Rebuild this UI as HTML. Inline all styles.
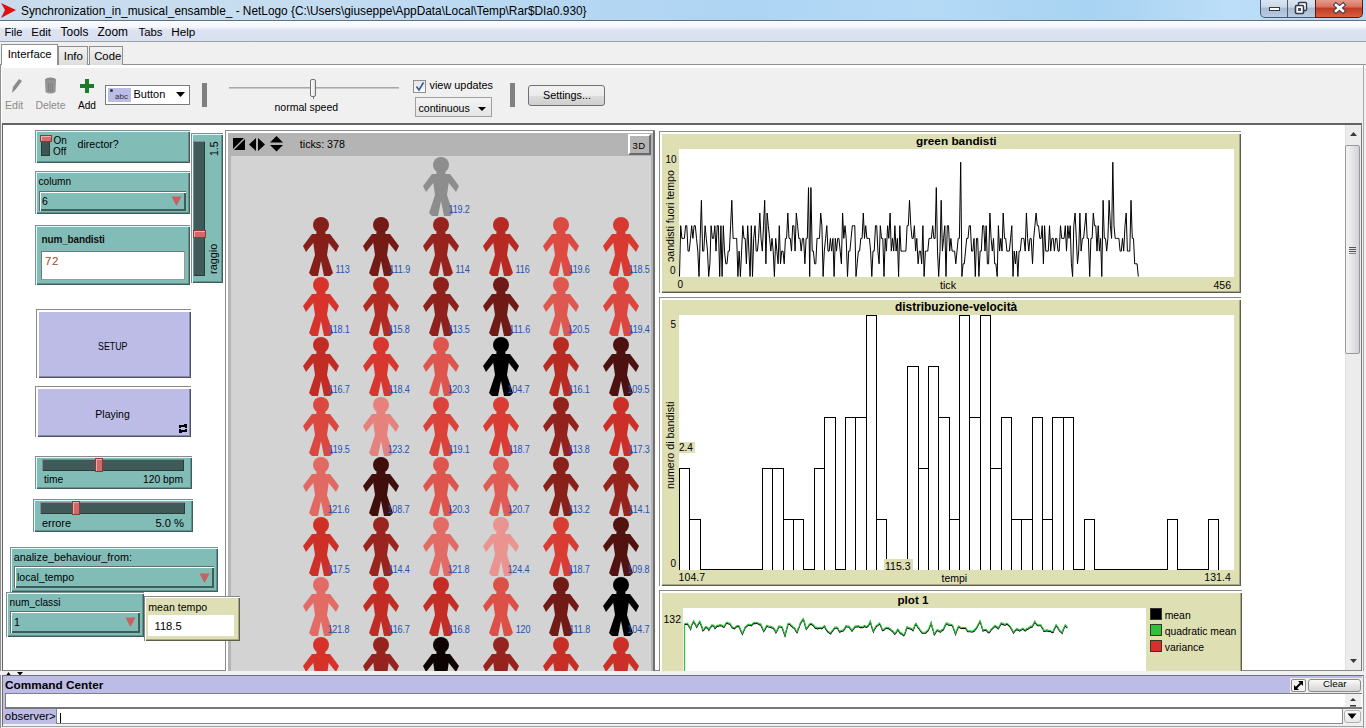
<!DOCTYPE html><html><head><meta charset="utf-8"><style>
*{margin:0;padding:0;box-sizing:border-box}
html,body{width:1366px;height:728px;overflow:hidden;background:#f0f0f0;font-family:"Liberation Sans",sans-serif;font-size:12px;color:#000;position:relative}
.a{position:absolute}
.t{position:absolute;white-space:nowrap;line-height:1}
</style></head><body>

<div class="a" style="left:0;top:0;width:1366px;height:21px;background:linear-gradient(90deg,#c9dcee 0%,#c6ddf0 20%,#b6d7f2 40%,#aed5f4 55%,#b4daf6 68%,#a8d3f2 80%,#bcdef8 90%,#b3d8f4 100%)"></div>
<div class="a" style="left:0;top:20px;width:1366px;height:1px;background:#5f6f80"></div>
<svg class="a" style="left:0;top:2px" width="18" height="17"><polygon points="1,1 16,8 1,16 5,8" fill="#e01010"/></svg>
<div class="t" style="left:21px;top:6px;font-size:11.85px;color:#000">Synchronization_in_musical_ensamble_ - NetLogo {C:\Users\giuseppe\AppData\Local\Temp\Rar$DIa0.930}</div>
<div class="a" style="left:1260px;top:-1px;width:28px;height:19px;border:1px solid #4a5a6c;border-top:none;border-radius:0 0 0 5px;background:linear-gradient(#dbe6f2 0%,#c9d9ea 45%,#a6bbd2 50%,#b8cde2 100%)"></div>
<div class="a" style="left:1269px;top:7px;width:11px;height:4px;background:#fff;border:1px solid #333a44"></div>
<div class="a" style="left:1288px;top:-1px;width:27px;height:19px;border-bottom:1px solid #4a5a6c;background:linear-gradient(#dbe6f2 0%,#c9d9ea 45%,#a6bbd2 50%,#b8cde2 100%)"></div>
<svg class="a" style="left:1294px;top:1px" width="14" height="15"><rect x="4.5" y="1.5" width="8" height="8" rx="1" fill="#fff" stroke="#333a44" stroke-width="1.4"/><rect x="1.5" y="4.5" width="8" height="8" rx="1" fill="#fff" stroke="#333a44" stroke-width="1.6"/><rect x="4" y="7" width="3" height="3" fill="#4a5260"/></svg>
<div class="a" style="left:1315px;top:-1px;width:48px;height:19px;border:1px solid #5a1a10;border-top:none;border-radius:0 0 5px 0;background:linear-gradient(#e8a090 0%,#d87060 45%,#c03a20 50%,#d86040 100%)"></div>
<svg class="a" style="left:1331px;top:1px" width="16" height="14"><path d="M5,4 L12,10 M12,4 L5,10" stroke="#40384a" stroke-width="4.6" stroke-linecap="square"/><path d="M5,4 L12,10 M12,4 L5,10" stroke="#fff" stroke-width="2.6" stroke-linecap="square"/></svg>

<div class="a" style="left:0;top:21px;width:1366px;height:20px;background:linear-gradient(#fbfcfe 0%,#f3f6fb 30%,#dde3f2 45%,#d9e0f1 100%)"></div>
<div class="a" style="left:0;top:41px;width:1366px;height:1px;background:#a0a0a0"></div>
<div class="t" style="left:4.5px;top:26.5px;font-size:11.2px">File</div>
<div class="t" style="left:31.3px;top:26.5px;font-size:11.4px">Edit</div>
<div class="t" style="left:60.6px;top:26.5px;font-size:11.9px">Tools</div>
<div class="t" style="left:97.5px;top:26.5px;font-size:11.9px">Zoom</div>
<div class="t" style="left:138.5px;top:26.5px;font-size:11.4px">Tabs</div>
<div class="t" style="left:171.3px;top:26px;font-size:11.7px">Help</div>
<div class="a" style="left:0;top:64px;width:1366px;height:1px;background:#8e8f8f"></div>
<div class="a" style="left:1px;top:44px;width:57px;height:21px;background:#fff;border:1px solid #8e8f8f;border-bottom:none"></div>
<div class="t" style="left:7.7px;top:49px;font-size:11.3px">Interface</div>
<div class="a" style="left:58px;top:46px;width:30px;height:19px;background:linear-gradient(#f2f2f2,#dddddd);border:1px solid #8e8f8f;border-bottom:none"></div>
<div class="t" style="left:63.7px;top:51px;font-size:11.5px">Info</div>
<div class="a" style="left:89px;top:46px;width:34px;height:19px;background:linear-gradient(#f2f2f2,#dddddd);border:1px solid #8e8f8f;border-bottom:none"></div>
<div class="t" style="left:94.2px;top:51px;font-size:11.3px">Code</div>
<div class="a" style="left:1px;top:65px;width:1365px;height:58px;background:#f0f0f0;border-left:1px solid #fff"></div>
<div class="a" style="left:1px;top:65px;width:1365px;height:3px;background:#fff"></div>
<svg class="a" style="left:10px;top:78px" width="14" height="17"><polygon points="2,15 3,9 9,1 12,3 6,11" fill="#8a8a8a"/></svg>
<svg class="a" style="left:44px;top:77px" width="14" height="18"><ellipse cx="6.5" cy="3" rx="5.5" ry="2.5" fill="#8a8a8a"/><path d="M1,3 L1.5,15 Q6.5,18 11.5,15 L12,3 Z" fill="#949494"/><path d="M4.5,6 V14 M6.5,6 V15 M8.5,6 V14" stroke="#7c7c7c" stroke-width="0.8"/></svg>
<div class="a" style="left:85px;top:79px;width:4px;height:14px;background:#1a7b2a"></div>
<div class="a" style="left:80px;top:84px;width:14px;height:4px;background:#1a7b2a"></div>
<div class="t" style="left:5px;top:100px;font-size:10.6px;color:#8c8c8c">Edit</div>
<div class="t" style="left:35.5px;top:101px;font-size:10.4px;color:#8c8c8c">Delete</div>
<div class="t" style="left:78px;top:101px;font-size:10.1px;color:#000">Add</div>
<div class="a" style="left:105px;top:85px;width:85px;height:20px;border:1px solid #7a7a7a;background:#fff"></div>
<div class="a" style="left:108px;top:88px;width:23px;height:14px;background:#bcbce6"></div>
<div class="t" style="left:115px;top:93px;font-size:8px;color:#333">abc</div>
<div class="a" style="left:110px;top:89px;width:3px;height:3px;background:#333;border-radius:2px"></div>
<div class="t" style="left:133.5px;top:89px;font-size:11px">Button</div>
<svg class="a" style="left:176px;top:92px" width="10" height="6"><polygon points="0,0 9,0 4.5,5" fill="#000"/></svg>
<div class="a" style="left:202px;top:83px;width:5px;height:24px;background:#808080"></div>
<div class="a" style="left:229px;top:87px;width:170px;height:2px;background:#c8c8c8;border-top:1px solid #a8a8a8"></div>
<div class="a" style="left:310px;top:79px;width:6px;height:18px;background:linear-gradient(90deg,#fff,#e0e0e0);border:1px solid #707070;border-radius:2px"></div>
<div class="a" style="left:313px;top:96px;width:1px;height:3px;background:#777"></div>
<div class="t" style="left:274.5px;top:102px;font-size:10.5px">normal speed</div>
<div class="a" style="left:413px;top:80px;width:13px;height:13px;border:1px solid #8f8f8f;background:linear-gradient(#e6e6e6,#fafafa)"></div>
<svg class="a" style="left:415px;top:81px" width="10" height="11"><path d="M1.5,5.5 L4,9 L8.5,1.5" stroke="#3a5aa0" stroke-width="1.6" fill="none"/></svg>
<div class="t" style="left:429.5px;top:80px;font-size:10.9px">view updates</div>
<div class="a" style="left:415px;top:97px;width:77px;height:20px;border:1px solid #a0a0a0;background:linear-gradient(#f4f4f4,#e4e4e4)"></div>
<div class="t" style="left:418.5px;top:103px;font-size:10.6px">continuous</div>
<svg class="a" style="left:478px;top:107px" width="9" height="5"><polygon points="0,0 8,0 4,4" fill="#000"/></svg>
<div class="a" style="left:510px;top:83px;width:5px;height:24px;background:#808080"></div>
<div class="a" style="left:528px;top:85px;width:77px;height:21px;border:1px solid #707070;border-radius:3px;background:linear-gradient(#f2f2f2 0%,#ebebeb 50%,#dddddd 51%,#cfcfcf 100%)"></div>
<div class="t" style="left:543px;top:90px;font-size:10.8px">Settings...</div>
<div class="a" style="left:0;top:64px;width:1px;height:664px;background:#8e8f8f"></div>
<div class="a" style="left:2px;top:123px;width:1360px;height:548px;background:#fff;border-top:2px solid #646464;border-left:1px solid #646464;border-right:1px solid #7a7a7a;border-bottom:1px solid #8a8a8a"></div>
<div class="a" style="left:1362px;top:123px;width:4px;height:605px;background:#f0f0f0"></div>
<div class="a" style="left:1363px;top:64px;width:1px;height:664px;background:#a8a8a8"></div>
<div class="a" style="left:1345px;top:125px;width:16px;height:545px;background:#ececec;border-left:1px solid #e0e0e0"></div>
<svg class="a" style="left:1349px;top:131px" width="10" height="6"><polygon points="1,5 4.5,1 8,5" fill="#3a3a3a"/></svg>
<svg class="a" style="left:1349px;top:658px" width="10" height="6"><polygon points="1,1 4.5,5 8,1" fill="#3a3a3a"/></svg>
<div class="a" style="left:1345px;top:145px;width:15px;height:209px;border:1px solid #989898;border-radius:2px;background:linear-gradient(90deg,#f4f4f4 0%,#e8e8e8 40%,#d0d0d8 100%)"></div>
<div class="a" style="left:1349px;top:247px;width:7px;height:1px;background:#555;box-shadow:0 2px 0 #555,0 4px 0 #555,0 6px 0 #888"></div>
<div class="a" style="left:0;top:671px;width:1366px;height:4px;background:#f0f0f0"></div>
<svg class="a" style="left:6px;top:672px" width="20" height="4"><polygon points="0,3.5 2.5,0 5,3.5" fill="#000"/><polygon points="11,0 17,0 14,3.5" fill="#000"/></svg>
<div class="a" style="left:2px;top:675px;width:1362px;height:52px;background:#f0f0f0;border:1px solid #707070;border-bottom-color:#a0a0a0;border-right-color:#9a9a9a"></div>
<div class="a" style="left:3px;top:676px;width:1359px;height:17px;background:#bcbce6"></div>
<div class="a" style="left:1290px;top:678px;width:72px;height:15px;background:#ececec"></div>
<div class="t" style="left:5px;top:680px;font-size:11.8px;font-weight:bold">Command Center</div>
<div class="a" style="left:1291px;top:679px;width:15px;height:13px;border:1px solid #8a8a8a;background:#f4f4f4;border-radius:2px"></div>
<svg class="a" style="left:1293px;top:680px" width="11" height="11"><path d="M2,9 L9,2" stroke="#000" stroke-width="2"/><polygon points="5,1 10,1 10,6" fill="#000"/><polygon points="1,5 1,10 6,10" fill="#000"/></svg>
<div class="a" style="left:1308px;top:679px;width:53px;height:13px;border:1px solid #8a8a8a;border-radius:3px;background:linear-gradient(#fbfbfb,#e6e6e6 50%,#d6d6d6)"></div>
<div class="t" style="left:1323px;top:679px;font-size:9.8px">Clear</div>
<div class="a" style="left:5px;top:693px;width:1357px;height:16px;background:#fff;border-top:1px solid #808080;border-left:1px solid #808080;border-bottom:2px solid #777"></div>
<div class="a" style="left:1345px;top:694px;width:16px;height:13px;background:#efefef"></div>
<svg class="a" style="left:1349px;top:697px" width="8" height="10"><polygon points="1,4 4,1 7,4" fill="#333"/><rect x="1" y="8" width="6" height="1.5" fill="#333"/></svg>
<div class="a" style="left:3px;top:709px;width:54px;height:15px;background:#bcbce6"></div>
<div class="a" style="left:3px;top:693px;width:2px;height:16px;background:#bcbce6"></div>
<div class="t" style="left:4.8px;top:711px;font-size:11.4px">observer&gt;</div>
<div class="a" style="left:56px;top:709px;width:1287px;height:15px;background:#fff;border:1px solid #828790;border-top:none"></div>
<div class="a" style="left:60px;top:713px;width:1px;height:10px;background:#000"></div>
<div class="a" style="left:1344px;top:710px;width:17px;height:13px;border:1px solid #b0b0b0;border-radius:3px;background:linear-gradient(#fafafa,#e8e8e8)"></div>
<svg class="a" style="left:1347px;top:713px" width="11" height="7"><polygon points="0.5,0.5 9.5,0.5 5,6" fill="#000"/></svg>
<div class="a" style="left:35px;top:130px;width:155px;height:33px;background:#82bcb7;border:1px solid #8a8a8a;border-right:none;border-bottom:none;box-shadow:inset 1px 1px 0 #d2ffff,inset -1px -1px 0 #3f5d5b,inset -2px -2px 0 #62908c"></div>
<div class="a" style="left:41px;top:141px;width:9px;height:15px;background:#3c5654;border:1px solid #2a3a3a"></div>
<div class="a" style="left:40px;top:135px;width:12px;height:7px;background:#d07070;border:1px solid #8a3a3a;box-shadow:inset 1px 1px 0 #f0b0b0"></div>
<div class="t" style="left:53.5px;top:136px;font-size:10px">On</div>
<div class="t" style="left:53px;top:147px;font-size:10px">Off</div>
<div class="t" style="left:77.5px;top:139px;font-size:10.6px">director?</div>
<div class="a" style="left:35px;top:171px;width:155px;height:43px;background:#82bcb7;border:1px solid #8a8a8a;border-right:none;border-bottom:none;box-shadow:inset 1px 1px 0 #d2ffff,inset -1px -1px 0 #3f5d5b,inset -2px -2px 0 #62908c"></div>
<div class="t" style="left:38.5px;top:177px;font-size:10.1px">column</div>
<div class="a" style="left:39px;top:191px;width:147px;height:20px;background:#82bcb7;border-top:1px solid #6a6a6a;border-left:1px solid #6a6a6a;box-shadow:inset 1px 1px 0 #fff,inset -2px -2px 0 #3f5d5b"></div>
<div class="t" style="left:42px;top:196px;font-size:10.5px">6</div>
<svg class="a" style="left:171px;top:196px" width="12" height="11"><polygon points="0.5,0.5 10.5,0.5 5.5,10" fill="#c76060"/></svg>
<div class="a" style="left:35px;top:225px;width:155px;height:60px;background:#82bcb7;border:1px solid #8a8a8a;border-right:none;border-bottom:none;box-shadow:inset 1px 1px 0 #d2ffff,inset -1px -1px 0 #3f5d5b,inset -2px -2px 0 #62908c"></div>
<div class="t" style="left:41.5px;top:235px;font-size:10px;font-weight:bold;letter-spacing:-0.15px;color:#111">num_bandisti</div>
<div class="a" style="left:41px;top:251px;width:144px;height:29px;background:#fff;border-top:1px solid #777;border-left:1px solid #777;border-right:1px solid #999;border-bottom:1px solid #999"></div>
<div class="t" style="left:45px;top:256px;font-size:11.5px;color:#a04a20;letter-spacing:0.6px">72</div>
<div class="a" style="left:191px;top:133px;width:32px;height:150px;background:#82bcb7;border:1px solid #8a8a8a;border-right:none;border-bottom:none;box-shadow:inset 1px 1px 0 #d2ffff,inset -1px -1px 0 #3f5d5b,inset -2px -2px 0 #62908c"></div>
<div class="a" style="left:193px;top:141px;width:12px;height:135px;background:#3f5a58;border-top:1px solid #8a8a8a;border-left:1px solid #8a8a8a;box-shadow:inset -1px -1px 0 #283c3a"></div>
<div class="a" style="left:193px;top:230px;width:13px;height:8px;background:#d06868;border:1px solid #8a3a3a;box-shadow:inset 1px 1px 0 #f0a8a8"></div>
<div class="t" style="left:209px;top:156px;font-size:10.5px;transform:rotate(-90deg);transform-origin:0 0">1.5</div>
<div class="t" style="left:208px;top:274px;font-size:10.9px;transform:rotate(-90deg);transform-origin:0 0">raggio</div>
<div class="a" style="left:36px;top:309px;width:155px;height:69px;background:#bcbce6;border:1px solid #8a8a8a;border-right:none;border-bottom:none;box-shadow:inset 2px 2px 0 #fff,inset -1px -1px 0 #505068,inset -2px -2px 0 #8a8aa8"></div>
<div class="t" style="left:97.5px;top:341px;font-size:10.5px;transform:scaleX(0.84);transform-origin:0 0">SETUP</div>
<div class="a" style="left:35px;top:386px;width:156px;height:51px;background:#bcbce6;border:1px solid #8a8a8a;border-right:none;border-bottom:none;box-shadow:inset 2px 2px 0 #fff,inset -1px -1px 0 #505068,inset -2px -2px 0 #8a8aa8"></div>
<div class="t" style="left:95.3px;top:409px;font-size:10.5px">Playing</div>
<svg class="a" style="left:179px;top:424px" width="9" height="10" shape-rendering="crispEdges"><rect x="0" y="1" width="8" height="2" fill="#000"/><rect x="6" y="0" width="2" height="4" fill="#000"/><rect x="0" y="3" width="2" height="1" fill="#000"/><rect x="5" y="0" width="1" height="1" fill="#000"/><rect x="0" y="6" width="8" height="2" fill="#000"/><rect x="0" y="5" width="2" height="4" fill="#000"/><rect x="6" y="5" width="2" height="1" fill="#000"/><rect x="2" y="8" width="1" height="1" fill="#000"/></svg>
<div class="a" style="left:35px;top:456px;width:157px;height:33px;background:#82bcb7;border:1px solid #8a8a8a;border-right:none;border-bottom:none;box-shadow:inset 1px 1px 0 #d2ffff,inset -1px -1px 0 #3f5d5b,inset -2px -2px 0 #62908c"></div>
<div class="a" style="left:42px;top:459px;width:142px;height:12px;background:#3f5a58;border-top:1px solid #8a8a8a;border-left:1px solid #8a8a8a;box-shadow:inset -1px -1px 0 #283c3a"></div>
<div class="a" style="left:95px;top:458px;width:8px;height:14px;background:#d06868;border:1px solid #8a3a3a;box-shadow:inset 1px 1px 0 #f0a8a8"></div>
<div class="t" style="left:44px;top:475px;font-size:10.2px">time</div>
<div class="t" style="right:1183px;top:475px;font-size:10.3px">120 bpm</div>
<div class="a" style="left:33px;top:499px;width:160px;height:33px;background:#82bcb7;border:1px solid #8a8a8a;border-right:none;border-bottom:none;box-shadow:inset 1px 1px 0 #d2ffff,inset -1px -1px 0 #3f5d5b,inset -2px -2px 0 #62908c"></div>
<div class="a" style="left:40px;top:502px;width:145px;height:12px;background:#3f5a58;border-top:1px solid #8a8a8a;border-left:1px solid #8a8a8a;box-shadow:inset -1px -1px 0 #283c3a"></div>
<div class="a" style="left:72px;top:501px;width:8px;height:14px;background:#d06868;border:1px solid #8a3a3a;box-shadow:inset 1px 1px 0 #f0a8a8"></div>
<div class="t" style="left:42px;top:518px;font-size:10.9px">errore</div>
<div class="t" style="right:1182px;top:518px;font-size:11.2px">5.0 %</div>
<div class="a" style="left:10px;top:547px;width:208px;height:45px;background:#82bcb7;border:1px solid #8a8a8a;border-right:none;border-bottom:none;box-shadow:inset 1px 1px 0 #d2ffff,inset -1px -1px 0 #3f5d5b,inset -2px -2px 0 #62908c"></div>
<div class="t" style="left:13.7px;top:552px;font-size:10.8px">analize_behaviour_from:</div>
<div class="a" style="left:14px;top:566px;width:200px;height:22px;background:#82bcb7;border-top:1px solid #6a6a6a;border-left:1px solid #6a6a6a;box-shadow:inset 1px 1px 0 #fff,inset -2px -2px 0 #3f5d5b"></div>
<div class="t" style="left:17px;top:572px;font-size:10.6px">local_tempo</div>
<svg class="a" style="left:199px;top:573px" width="12" height="11"><polygon points="0.5,0.5 10.5,0.5 5.5,10" fill="#c76060"/></svg>
<div class="a" style="left:6px;top:592px;width:138px;height:45px;background:#82bcb7;border:1px solid #8a8a8a;border-right:none;border-bottom:none;box-shadow:inset 1px 1px 0 #d2ffff,inset -1px -1px 0 #3f5d5b,inset -2px -2px 0 #62908c"></div>
<div class="t" style="left:9.6px;top:598px;font-size:10.2px">num_classi</div>
<div class="a" style="left:10px;top:611px;width:130px;height:22px;background:#82bcb7;border-top:1px solid #6a6a6a;border-left:1px solid #6a6a6a;box-shadow:inset 1px 1px 0 #fff,inset -2px -2px 0 #3f5d5b"></div>
<div class="t" style="left:14px;top:617px;font-size:10.6px">1</div>
<svg class="a" style="left:125px;top:617px" width="12" height="11"><polygon points="0.5,0.5 10.5,0.5 5.5,10" fill="#c76060"/></svg>
<div class="a" style="left:225px;top:130px;width:430px;height:541px;background:#fff;border-top:1px solid #8a8a8a;border-left:1px solid #8a8a8a"></div>
<div class="a" style="left:653px;top:131px;width:2px;height:540px;background:#6e6e6e"></div>
<div class="a" style="left:228px;top:133px;width:425px;height:538px;background:#b4b4b4"></div>
<div class="a" style="left:231px;top:156px;width:420px;height:515px;background:#d3d3d3;overflow:hidden" id="world">
<svg class="a" style="left:180px;top:0px" width="60" height="60" viewBox="0 0 300 300" fill="rgb(141,141,141)"><circle cx="150" cy="45" r="40"/><polygon points="105,90 120,195 90,285 105,300 135,300 150,225 165,300 195,300 210,285 180,195 195,90"/><rect x="127" y="79" width="45" height="15"/><polygon points="195,90 240,150 225,180 165,105"/><polygon points="105,90 60,150 75,180 135,105"/></svg>
<div class="t lbl" style="right:181px;top:48.5px">119.2</div>
<svg class="a" style="left:60px;top:60px" width="60" height="60" viewBox="0 0 300 300" fill="rgb(134,31,25)"><circle cx="150" cy="45" r="40"/><polygon points="105,90 120,195 90,285 105,300 135,300 150,225 165,300 195,300 210,285 180,195 195,90"/><rect x="127" y="79" width="45" height="15"/><polygon points="195,90 240,150 225,180 165,105"/><polygon points="105,90 60,150 75,180 135,105"/></svg>
<div class="t lbl" style="right:301px;top:108.5px">113</div>
<svg class="a" style="left:120px;top:60px" width="60" height="60" viewBox="0 0 300 300" fill="rgb(116,27,22)"><circle cx="150" cy="45" r="40"/><polygon points="105,90 120,195 90,285 105,300 135,300 150,225 165,300 195,300 210,285 180,195 195,90"/><rect x="127" y="79" width="45" height="15"/><polygon points="195,90 240,150 225,180 165,105"/><polygon points="105,90 60,150 75,180 135,105"/></svg>
<div class="t lbl" style="right:241px;top:108.5px">111.9</div>
<svg class="a" style="left:180px;top:60px" width="60" height="60" viewBox="0 0 300 300" fill="rgb(150,35,29)"><circle cx="150" cy="45" r="40"/><polygon points="105,90 120,195 90,285 105,300 135,300 150,225 165,300 195,300 210,285 180,195 195,90"/><rect x="127" y="79" width="45" height="15"/><polygon points="195,90 240,150 225,180 165,105"/><polygon points="105,90 60,150 75,180 135,105"/></svg>
<div class="t lbl" style="right:181px;top:108.5px">114</div>
<svg class="a" style="left:240px;top:60px" width="60" height="60" viewBox="0 0 300 300" fill="rgb(182,42,35)"><circle cx="150" cy="45" r="40"/><polygon points="105,90 120,195 90,285 105,300 135,300 150,225 165,300 195,300 210,285 180,195 195,90"/><rect x="127" y="79" width="45" height="15"/><polygon points="195,90 240,150 225,180 165,105"/><polygon points="105,90 60,150 75,180 135,105"/></svg>
<div class="t lbl" style="right:121px;top:108.5px">116</div>
<svg class="a" style="left:300px;top:60px" width="60" height="60" viewBox="0 0 300 300" fill="rgb(220,74,66)"><circle cx="150" cy="45" r="40"/><polygon points="105,90 120,195 90,285 105,300 135,300 150,225 165,300 195,300 210,285 180,195 195,90"/><rect x="127" y="79" width="45" height="15"/><polygon points="195,90 240,150 225,180 165,105"/><polygon points="105,90 60,150 75,180 135,105"/></svg>
<div class="t lbl" style="right:61px;top:108.5px">119.6</div>
<svg class="a" style="left:360px;top:60px" width="60" height="60" viewBox="0 0 300 300" fill="rgb(216,57,48)"><circle cx="150" cy="45" r="40"/><polygon points="105,90 120,195 90,285 105,300 135,300 150,225 165,300 195,300 210,285 180,195 195,90"/><rect x="127" y="79" width="45" height="15"/><polygon points="195,90 240,150 225,180 165,105"/><polygon points="105,90 60,150 75,180 135,105"/></svg>
<div class="t lbl" style="right:1px;top:108.5px">118.5</div>
<svg class="a" style="left:60px;top:120px" width="60" height="60" viewBox="0 0 300 300" fill="rgb(215,51,42)"><circle cx="150" cy="45" r="40"/><polygon points="105,90 120,195 90,285 105,300 135,300 150,225 165,300 195,300 210,285 180,195 195,90"/><rect x="127" y="79" width="45" height="15"/><polygon points="195,90 240,150 225,180 165,105"/><polygon points="105,90 60,150 75,180 135,105"/></svg>
<div class="t lbl" style="right:301px;top:168.5px">118.1</div>
<svg class="a" style="left:120px;top:120px" width="60" height="60" viewBox="0 0 300 300" fill="rgb(179,42,34)"><circle cx="150" cy="45" r="40"/><polygon points="105,90 120,195 90,285 105,300 135,300 150,225 165,300 195,300 210,285 180,195 195,90"/><rect x="127" y="79" width="45" height="15"/><polygon points="195,90 240,150 225,180 165,105"/><polygon points="105,90 60,150 75,180 135,105"/></svg>
<div class="t lbl" style="right:241px;top:168.5px">115.8</div>
<svg class="a" style="left:180px;top:120px" width="60" height="60" viewBox="0 0 300 300" fill="rgb(142,33,27)"><circle cx="150" cy="45" r="40"/><polygon points="105,90 120,195 90,285 105,300 135,300 150,225 165,300 195,300 210,285 180,195 195,90"/><rect x="127" y="79" width="45" height="15"/><polygon points="195,90 240,150 225,180 165,105"/><polygon points="105,90 60,150 75,180 135,105"/></svg>
<div class="t lbl" style="right:181px;top:168.5px">113.5</div>
<svg class="a" style="left:240px;top:120px" width="60" height="60" viewBox="0 0 300 300" fill="rgb(111,26,21)"><circle cx="150" cy="45" r="40"/><polygon points="105,90 120,195 90,285 105,300 135,300 150,225 165,300 195,300 210,285 180,195 195,90"/><rect x="127" y="79" width="45" height="15"/><polygon points="195,90 240,150 225,180 165,105"/><polygon points="105,90 60,150 75,180 135,105"/></svg>
<div class="t lbl" style="right:121px;top:168.5px">111.6</div>
<svg class="a" style="left:300px;top:120px" width="60" height="60" viewBox="0 0 300 300" fill="rgb(222,88,80)"><circle cx="150" cy="45" r="40"/><polygon points="105,90 120,195 90,285 105,300 135,300 150,225 165,300 195,300 210,285 180,195 195,90"/><rect x="127" y="79" width="45" height="15"/><polygon points="195,90 240,150 225,180 165,105"/><polygon points="105,90 60,150 75,180 135,105"/></svg>
<div class="t lbl" style="right:61px;top:168.5px">120.5</div>
<svg class="a" style="left:360px;top:120px" width="60" height="60" viewBox="0 0 300 300" fill="rgb(219,71,63)"><circle cx="150" cy="45" r="40"/><polygon points="105,90 120,195 90,285 105,300 135,300 150,225 165,300 195,300 210,285 180,195 195,90"/><rect x="127" y="79" width="45" height="15"/><polygon points="195,90 240,150 225,180 165,105"/><polygon points="105,90 60,150 75,180 135,105"/></svg>
<div class="t lbl" style="right:1px;top:168.5px">119.4</div>
<svg class="a" style="left:60px;top:180px" width="60" height="60" viewBox="0 0 300 300" fill="rgb(193,45,37)"><circle cx="150" cy="45" r="40"/><polygon points="105,90 120,195 90,285 105,300 135,300 150,225 165,300 195,300 210,285 180,195 195,90"/><rect x="127" y="79" width="45" height="15"/><polygon points="195,90 240,150 225,180 165,105"/><polygon points="105,90 60,150 75,180 135,105"/></svg>
<div class="t lbl" style="right:301px;top:228.5px">116.7</div>
<svg class="a" style="left:120px;top:180px" width="60" height="60" viewBox="0 0 300 300" fill="rgb(216,55,47)"><circle cx="150" cy="45" r="40"/><polygon points="105,90 120,195 90,285 105,300 135,300 150,225 165,300 195,300 210,285 180,195 195,90"/><rect x="127" y="79" width="45" height="15"/><polygon points="195,90 240,150 225,180 165,105"/><polygon points="105,90 60,150 75,180 135,105"/></svg>
<div class="t lbl" style="right:241px;top:228.5px">118.4</div>
<svg class="a" style="left:180px;top:180px" width="60" height="60" viewBox="0 0 300 300" fill="rgb(222,85,77)"><circle cx="150" cy="45" r="40"/><polygon points="105,90 120,195 90,285 105,300 135,300 150,225 165,300 195,300 210,285 180,195 195,90"/><rect x="127" y="79" width="45" height="15"/><polygon points="195,90 240,150 225,180 165,105"/><polygon points="105,90 60,150 75,180 135,105"/></svg>
<div class="t lbl" style="right:181px;top:228.5px">120.3</div>
<svg class="a" style="left:240px;top:180px" width="60" height="60" viewBox="0 0 300 300" fill="rgb(0,0,0)"><circle cx="150" cy="45" r="40"/><polygon points="105,90 120,195 90,285 105,300 135,300 150,225 165,300 195,300 210,285 180,195 195,90"/><rect x="127" y="79" width="45" height="15"/><polygon points="195,90 240,150 225,180 165,105"/><polygon points="105,90 60,150 75,180 135,105"/></svg>
<div class="t lbl" style="right:121px;top:228.5px">104.7</div>
<svg class="a" style="left:300px;top:180px" width="60" height="60" viewBox="0 0 300 300" fill="rgb(184,43,35)"><circle cx="150" cy="45" r="40"/><polygon points="105,90 120,195 90,285 105,300 135,300 150,225 165,300 195,300 210,285 180,195 195,90"/><rect x="127" y="79" width="45" height="15"/><polygon points="195,90 240,150 225,180 165,105"/><polygon points="105,90 60,150 75,180 135,105"/></svg>
<div class="t lbl" style="right:61px;top:228.5px">116.1</div>
<svg class="a" style="left:360px;top:180px" width="60" height="60" viewBox="0 0 300 300" fill="rgb(77,18,15)"><circle cx="150" cy="45" r="40"/><polygon points="105,90 120,195 90,285 105,300 135,300 150,225 165,300 195,300 210,285 180,195 195,90"/><rect x="127" y="79" width="45" height="15"/><polygon points="195,90 240,150 225,180 165,105"/><polygon points="105,90 60,150 75,180 135,105"/></svg>
<div class="t lbl" style="right:1px;top:228.5px">109.5</div>
<svg class="a" style="left:60px;top:240px" width="60" height="60" viewBox="0 0 300 300" fill="rgb(219,72,64)"><circle cx="150" cy="45" r="40"/><polygon points="105,90 120,195 90,285 105,300 135,300 150,225 165,300 195,300 210,285 180,195 195,90"/><rect x="127" y="79" width="45" height="15"/><polygon points="195,90 240,150 225,180 165,105"/><polygon points="105,90 60,150 75,180 135,105"/></svg>
<div class="t lbl" style="right:301px;top:288.5px">119.5</div>
<svg class="a" style="left:120px;top:240px" width="60" height="60" viewBox="0 0 300 300" fill="rgb(230,129,124)"><circle cx="150" cy="45" r="40"/><polygon points="105,90 120,195 90,285 105,300 135,300 150,225 165,300 195,300 210,285 180,195 195,90"/><rect x="127" y="79" width="45" height="15"/><polygon points="195,90 240,150 225,180 165,105"/><polygon points="105,90 60,150 75,180 135,105"/></svg>
<div class="t lbl" style="right:241px;top:288.5px">123.2</div>
<svg class="a" style="left:180px;top:240px" width="60" height="60" viewBox="0 0 300 300" fill="rgb(218,66,58)"><circle cx="150" cy="45" r="40"/><polygon points="105,90 120,195 90,285 105,300 135,300 150,225 165,300 195,300 210,285 180,195 195,90"/><rect x="127" y="79" width="45" height="15"/><polygon points="195,90 240,150 225,180 165,105"/><polygon points="105,90 60,150 75,180 135,105"/></svg>
<div class="t lbl" style="right:181px;top:288.5px">119.1</div>
<svg class="a" style="left:240px;top:240px" width="60" height="60" viewBox="0 0 300 300" fill="rgb(217,60,51)"><circle cx="150" cy="45" r="40"/><polygon points="105,90 120,195 90,285 105,300 135,300 150,225 165,300 195,300 210,285 180,195 195,90"/><rect x="127" y="79" width="45" height="15"/><polygon points="195,90 240,150 225,180 165,105"/><polygon points="105,90 60,150 75,180 135,105"/></svg>
<div class="t lbl" style="right:121px;top:288.5px">118.7</div>
<svg class="a" style="left:300px;top:240px" width="60" height="60" viewBox="0 0 300 300" fill="rgb(147,34,28)"><circle cx="150" cy="45" r="40"/><polygon points="105,90 120,195 90,285 105,300 135,300 150,225 165,300 195,300 210,285 180,195 195,90"/><rect x="127" y="79" width="45" height="15"/><polygon points="195,90 240,150 225,180 165,105"/><polygon points="105,90 60,150 75,180 135,105"/></svg>
<div class="t lbl" style="right:61px;top:288.5px">113.8</div>
<svg class="a" style="left:360px;top:240px" width="60" height="60" viewBox="0 0 300 300" fill="rgb(203,47,39)"><circle cx="150" cy="45" r="40"/><polygon points="105,90 120,195 90,285 105,300 135,300 150,225 165,300 195,300 210,285 180,195 195,90"/><rect x="127" y="79" width="45" height="15"/><polygon points="195,90 240,150 225,180 165,105"/><polygon points="105,90 60,150 75,180 135,105"/></svg>
<div class="t lbl" style="right:1px;top:288.5px">117.3</div>
<svg class="a" style="left:60px;top:300px" width="60" height="60" viewBox="0 0 300 300" fill="rgb(226,104,98)"><circle cx="150" cy="45" r="40"/><polygon points="105,90 120,195 90,285 105,300 135,300 150,225 165,300 195,300 210,285 180,195 195,90"/><rect x="127" y="79" width="45" height="15"/><polygon points="195,90 240,150 225,180 165,105"/><polygon points="105,90 60,150 75,180 135,105"/></svg>
<div class="t lbl" style="right:301px;top:348.5px">121.6</div>
<svg class="a" style="left:120px;top:300px" width="60" height="60" viewBox="0 0 300 300" fill="rgb(64,15,12)"><circle cx="150" cy="45" r="40"/><polygon points="105,90 120,195 90,285 105,300 135,300 150,225 165,300 195,300 210,285 180,195 195,90"/><rect x="127" y="79" width="45" height="15"/><polygon points="195,90 240,150 225,180 165,105"/><polygon points="105,90 60,150 75,180 135,105"/></svg>
<div class="t lbl" style="right:241px;top:348.5px">108.7</div>
<svg class="a" style="left:180px;top:300px" width="60" height="60" viewBox="0 0 300 300" fill="rgb(222,85,77)"><circle cx="150" cy="45" r="40"/><polygon points="105,90 120,195 90,285 105,300 135,300 150,225 165,300 195,300 210,285 180,195 195,90"/><rect x="127" y="79" width="45" height="15"/><polygon points="195,90 240,150 225,180 165,105"/><polygon points="105,90 60,150 75,180 135,105"/></svg>
<div class="t lbl" style="right:181px;top:348.5px">120.3</div>
<svg class="a" style="left:240px;top:300px" width="60" height="60" viewBox="0 0 300 300" fill="rgb(223,91,83)"><circle cx="150" cy="45" r="40"/><polygon points="105,90 120,195 90,285 105,300 135,300 150,225 165,300 195,300 210,285 180,195 195,90"/><rect x="127" y="79" width="45" height="15"/><polygon points="195,90 240,150 225,180 165,105"/><polygon points="105,90 60,150 75,180 135,105"/></svg>
<div class="t lbl" style="right:121px;top:348.5px">120.7</div>
<svg class="a" style="left:300px;top:300px" width="60" height="60" viewBox="0 0 300 300" fill="rgb(137,32,26)"><circle cx="150" cy="45" r="40"/><polygon points="105,90 120,195 90,285 105,300 135,300 150,225 165,300 195,300 210,285 180,195 195,90"/><rect x="127" y="79" width="45" height="15"/><polygon points="195,90 240,150 225,180 165,105"/><polygon points="105,90 60,150 75,180 135,105"/></svg>
<div class="t lbl" style="right:61px;top:348.5px">113.2</div>
<svg class="a" style="left:360px;top:300px" width="60" height="60" viewBox="0 0 300 300" fill="rgb(151,35,29)"><circle cx="150" cy="45" r="40"/><polygon points="105,90 120,195 90,285 105,300 135,300 150,225 165,300 195,300 210,285 180,195 195,90"/><rect x="127" y="79" width="45" height="15"/><polygon points="195,90 240,150 225,180 165,105"/><polygon points="105,90 60,150 75,180 135,105"/></svg>
<div class="t lbl" style="right:1px;top:348.5px">114.1</div>
<svg class="a" style="left:60px;top:360px" width="60" height="60" viewBox="0 0 300 300" fill="rgb(206,48,39)"><circle cx="150" cy="45" r="40"/><polygon points="105,90 120,195 90,285 105,300 135,300 150,225 165,300 195,300 210,285 180,195 195,90"/><rect x="127" y="79" width="45" height="15"/><polygon points="195,90 240,150 225,180 165,105"/><polygon points="105,90 60,150 75,180 135,105"/></svg>
<div class="t lbl" style="right:301px;top:408.5px">117.5</div>
<svg class="a" style="left:120px;top:360px" width="60" height="60" viewBox="0 0 300 300" fill="rgb(156,36,30)"><circle cx="150" cy="45" r="40"/><polygon points="105,90 120,195 90,285 105,300 135,300 150,225 165,300 195,300 210,285 180,195 195,90"/><rect x="127" y="79" width="45" height="15"/><polygon points="195,90 240,150 225,180 165,105"/><polygon points="105,90 60,150 75,180 135,105"/></svg>
<div class="t lbl" style="right:241px;top:408.5px">114.4</div>
<svg class="a" style="left:180px;top:360px" width="60" height="60" viewBox="0 0 300 300" fill="rgb(226,108,101)"><circle cx="150" cy="45" r="40"/><polygon points="105,90 120,195 90,285 105,300 135,300 150,225 165,300 195,300 210,285 180,195 195,90"/><rect x="127" y="79" width="45" height="15"/><polygon points="195,90 240,150 225,180 165,105"/><polygon points="105,90 60,150 75,180 135,105"/></svg>
<div class="t lbl" style="right:181px;top:408.5px">121.8</div>
<svg class="a" style="left:240px;top:360px" width="60" height="60" viewBox="0 0 300 300" fill="rgb(234,147,143)"><circle cx="150" cy="45" r="40"/><polygon points="105,90 120,195 90,285 105,300 135,300 150,225 165,300 195,300 210,285 180,195 195,90"/><rect x="127" y="79" width="45" height="15"/><polygon points="195,90 240,150 225,180 165,105"/><polygon points="105,90 60,150 75,180 135,105"/></svg>
<div class="t lbl" style="right:121px;top:408.5px">124.4</div>
<svg class="a" style="left:300px;top:360px" width="60" height="60" viewBox="0 0 300 300" fill="rgb(217,60,51)"><circle cx="150" cy="45" r="40"/><polygon points="105,90 120,195 90,285 105,300 135,300 150,225 165,300 195,300 210,285 180,195 195,90"/><rect x="127" y="79" width="45" height="15"/><polygon points="195,90 240,150 225,180 165,105"/><polygon points="105,90 60,150 75,180 135,105"/></svg>
<div class="t lbl" style="right:61px;top:408.5px">118.7</div>
<svg class="a" style="left:360px;top:360px" width="60" height="60" viewBox="0 0 300 300" fill="rgb(82,19,16)"><circle cx="150" cy="45" r="40"/><polygon points="105,90 120,195 90,285 105,300 135,300 150,225 165,300 195,300 210,285 180,195 195,90"/><rect x="127" y="79" width="45" height="15"/><polygon points="195,90 240,150 225,180 165,105"/><polygon points="105,90 60,150 75,180 135,105"/></svg>
<div class="t lbl" style="right:1px;top:408.5px">109.8</div>
<svg class="a" style="left:60px;top:420px" width="60" height="60" viewBox="0 0 300 300" fill="rgb(226,108,101)"><circle cx="150" cy="45" r="40"/><polygon points="105,90 120,195 90,285 105,300 135,300 150,225 165,300 195,300 210,285 180,195 195,90"/><rect x="127" y="79" width="45" height="15"/><polygon points="195,90 240,150 225,180 165,105"/><polygon points="105,90 60,150 75,180 135,105"/></svg>
<div class="t lbl" style="right:301px;top:468.5px">121.8</div>
<svg class="a" style="left:120px;top:420px" width="60" height="60" viewBox="0 0 300 300" fill="rgb(193,45,37)"><circle cx="150" cy="45" r="40"/><polygon points="105,90 120,195 90,285 105,300 135,300 150,225 165,300 195,300 210,285 180,195 195,90"/><rect x="127" y="79" width="45" height="15"/><polygon points="195,90 240,150 225,180 165,105"/><polygon points="105,90 60,150 75,180 135,105"/></svg>
<div class="t lbl" style="right:241px;top:468.5px">116.7</div>
<svg class="a" style="left:180px;top:420px" width="60" height="60" viewBox="0 0 300 300" fill="rgb(195,45,37)"><circle cx="150" cy="45" r="40"/><polygon points="105,90 120,195 90,285 105,300 135,300 150,225 165,300 195,300 210,285 180,195 195,90"/><rect x="127" y="79" width="45" height="15"/><polygon points="195,90 240,150 225,180 165,105"/><polygon points="105,90 60,150 75,180 135,105"/></svg>
<div class="t lbl" style="right:181px;top:468.5px">116.8</div>
<svg class="a" style="left:240px;top:420px" width="60" height="60" viewBox="0 0 300 300" fill="rgb(221,80,72)"><circle cx="150" cy="45" r="40"/><polygon points="105,90 120,195 90,285 105,300 135,300 150,225 165,300 195,300 210,285 180,195 195,90"/><rect x="127" y="79" width="45" height="15"/><polygon points="195,90 240,150 225,180 165,105"/><polygon points="105,90 60,150 75,180 135,105"/></svg>
<div class="t lbl" style="right:121px;top:468.5px">120</div>
<svg class="a" style="left:300px;top:420px" width="60" height="60" viewBox="0 0 300 300" fill="rgb(114,27,22)"><circle cx="150" cy="45" r="40"/><polygon points="105,90 120,195 90,285 105,300 135,300 150,225 165,300 195,300 210,285 180,195 195,90"/><rect x="127" y="79" width="45" height="15"/><polygon points="195,90 240,150 225,180 165,105"/><polygon points="105,90 60,150 75,180 135,105"/></svg>
<div class="t lbl" style="right:61px;top:468.5px">111.8</div>
<svg class="a" style="left:360px;top:420px" width="60" height="60" viewBox="0 0 300 300" fill="rgb(0,0,0)"><circle cx="150" cy="45" r="40"/><polygon points="105,90 120,195 90,285 105,300 135,300 150,225 165,300 195,300 210,285 180,195 195,90"/><rect x="127" y="79" width="45" height="15"/><polygon points="195,90 240,150 225,180 165,105"/><polygon points="105,90 60,150 75,180 135,105"/></svg>
<div class="t lbl" style="right:1px;top:468.5px">104.7</div>
<svg class="a" style="left:60px;top:480px" width="60" height="60" viewBox="0 0 300 300" fill="rgb(214,50,41)"><circle cx="150" cy="45" r="40"/><polygon points="105,90 120,195 90,285 105,300 135,300 150,225 165,300 195,300 210,285 180,195 195,90"/><rect x="127" y="79" width="45" height="15"/><polygon points="195,90 240,150 225,180 165,105"/><polygon points="105,90 60,150 75,180 135,105"/></svg>
<svg class="a" style="left:120px;top:480px" width="60" height="60" viewBox="0 0 300 300" fill="rgb(150,35,29)"><circle cx="150" cy="45" r="40"/><polygon points="105,90 120,195 90,285 105,300 135,300 150,225 165,300 195,300 210,285 180,195 195,90"/><rect x="127" y="79" width="45" height="15"/><polygon points="195,90 240,150 225,180 165,105"/><polygon points="105,90 60,150 75,180 135,105"/></svg>
<svg class="a" style="left:180px;top:480px" width="60" height="60" viewBox="0 0 300 300" fill="rgb(14,3,3)"><circle cx="150" cy="45" r="40"/><polygon points="105,90 120,195 90,285 105,300 135,300 150,225 165,300 195,300 210,285 180,195 195,90"/><rect x="127" y="79" width="45" height="15"/><polygon points="195,90 240,150 225,180 165,105"/><polygon points="105,90 60,150 75,180 135,105"/></svg>
<svg class="a" style="left:240px;top:480px" width="60" height="60" viewBox="0 0 300 300" fill="rgb(150,35,29)"><circle cx="150" cy="45" r="40"/><polygon points="105,90 120,195 90,285 105,300 135,300 150,225 165,300 195,300 210,285 180,195 195,90"/><rect x="127" y="79" width="45" height="15"/><polygon points="195,90 240,150 225,180 165,105"/><polygon points="105,90 60,150 75,180 135,105"/></svg>
<svg class="a" style="left:300px;top:480px" width="60" height="60" viewBox="0 0 300 300" fill="rgb(198,46,38)"><circle cx="150" cy="45" r="40"/><polygon points="105,90 120,195 90,285 105,300 135,300 150,225 165,300 195,300 210,285 180,195 195,90"/><rect x="127" y="79" width="45" height="15"/><polygon points="195,90 240,150 225,180 165,105"/><polygon points="105,90 60,150 75,180 135,105"/></svg>
<svg class="a" style="left:360px;top:480px" width="60" height="60" viewBox="0 0 300 300" fill="rgb(203,47,39)"><circle cx="150" cy="45" r="40"/><polygon points="105,90 120,195 90,285 105,300 135,300 150,225 165,300 195,300 210,285 180,195 195,90"/><rect x="127" y="79" width="45" height="15"/><polygon points="195,90 240,150 225,180 165,105"/><polygon points="105,90 60,150 75,180 135,105"/></svg>
</div>
<svg class="a" style="left:233px;top:138px" width="12" height="12"><polygon points="0,0 11,0 0,11" fill="#000"/><polygon points="12,1 12,12 1,12" fill="#000"/></svg>
<svg class="a" style="left:249px;top:138px" width="17" height="14"><polygon points="0,6.5 7,0 7,13" fill="#000"/><polygon points="9,0 16,6.5 9,13" fill="#000"/></svg>
<svg class="a" style="left:270px;top:136px" width="14" height="17"><polygon points="0,6.5 6.5,0 13,6.5" fill="#000"/><polygon points="0,9 13,9 6.5,15.5" fill="#000"/></svg>
<div class="t" style="left:299.8px;top:139px;font-size:10.7px">ticks: 378</div>
<div class="a" style="left:628px;top:134px;width:23px;height:21px;background:#b4b4b4;border-top:2px solid #fff;border-left:2px solid #fff;border-right:2px solid #6a6a6a;border-bottom:2px solid #6a6a6a"></div>
<div class="t" style="left:632.5px;top:141px;font-size:9.5px;letter-spacing:0.5px">3D</div>
<style>.lbl{font-size:10px;color:#2652b0;letter-spacing:-0.1px;transform:scaleX(0.9);transform-origin:100% 0}</style>
<div class="a" style="left:144px;top:596px;width:96px;height:45px;background:#dfdfb5;border:1px solid #8a8a8a;border-right:none;border-bottom:none;box-shadow:inset 1px 1px 0 #ffffff,inset -1px -1px 0 #5e5e4a,inset -2px -2px 0 #a8a888"></div>
<div class="t" style="left:148.3px;top:602px;font-size:10.6px">mean tempo</div>
<div class="a" style="left:148px;top:615px;width:86px;height:21px;background:#fff"></div>
<div class="t" style="left:154.5px;top:621px;font-size:11.2px">118.5</div>
<div class="a" style="left:659px;top:131px;width:582px;height:162px;background:#dfdfb4;border-top:1px solid #8a8a8a;border-left:1px solid #8a8a8a;box-shadow:inset 2px 2px 0 #fff,inset -1px -1px 0 #5e5e4a,inset -2px -2px 0 #a8a888"></div>
<div class="a" style="left:679px;top:149px;width:555px;height:128px;background:#fff"></div>
<div class="t" style="left:916px;top:136px;font-size:11.8px;font-weight:bold">green bandisti</div>
<div class="t" style="left:665.5px;top:155px;font-size:10px">10</div>
<div class="t" style="left:670px;top:265.5px;font-size:10px">0</div>
<div class="t" style="left:677.5px;top:279.5px;font-size:10px">0</div>
<div class="t" style="left:940px;top:280px;font-size:10.7px">tick</div>
<div class="t" style="left:1213.5px;top:280px;font-size:10.5px">456</div>
<div class="t" style="left:665px;top:261.5px;font-size:10.6px;transform:rotate(-90deg);transform-origin:0 0">ɔandisti fuori tempo</div>
<svg class="a" style="left:679px;top:149px" width="555" height="128"><polyline points="0.5,127.5 1.7,76.7 2.9,89.4 4.2,89.4 5.4,89.4 6.6,76.7 7.8,76.7 9.0,102.1 10.2,102.1 11.5,89.4 12.7,76.7 13.9,89.4 15.1,76.7 16.3,76.7 17.5,89.4 18.8,102.1 20.0,127.5 21.2,89.4 22.4,51.3 23.6,102.1 24.8,102.1 26.1,76.7 27.3,89.4 28.5,102.1 29.7,127.5 30.9,114.8 32.1,76.7 33.4,89.4 34.6,89.4 35.8,76.7 37.0,102.1 38.2,76.7 39.4,76.7 40.7,127.5 41.9,76.7 43.1,127.5 44.3,76.7 45.5,102.1 46.8,114.8 48.0,114.8 49.2,102.1 50.4,102.1 51.6,76.7 52.8,51.3 54.1,89.4 55.3,89.4 56.5,89.4 57.7,89.4 58.9,127.5 60.1,102.1 61.4,127.5 62.6,102.1 63.8,76.7 65.0,89.4 66.2,89.4 67.4,114.8 68.7,76.7 69.9,102.1 71.1,127.5 72.3,76.7 73.5,127.5 74.7,89.4 76.0,76.7 77.2,102.1 78.4,102.1 79.6,89.4 80.8,64.0 82.0,89.4 83.3,102.1 84.5,76.7 85.7,51.3 86.9,114.8 88.1,64.0 89.3,76.7 90.6,89.4 91.8,102.1 93.0,89.4 94.2,102.1 95.4,127.5 96.7,89.4 97.9,102.1 99.1,114.8 100.3,76.7 101.5,114.8 102.7,102.1 104.0,102.1 105.2,114.8 106.4,89.4 107.6,89.4 108.8,64.0 110.0,89.4 111.3,89.4 112.5,102.1 113.7,76.7 114.9,76.7 116.1,102.1 117.3,64.0 118.6,76.7 119.8,89.4 121.0,89.4 122.2,102.1 123.4,89.4 124.6,89.4 125.9,114.8 127.1,89.4 128.3,89.4 129.5,38.6 130.7,127.5 131.9,38.6 133.2,102.1 134.4,102.1 135.6,114.8 136.8,114.8 138.0,89.4 139.2,89.4 140.5,89.4 141.7,64.0 142.9,76.7 144.1,127.5 145.3,102.1 146.6,89.4 147.8,76.7 149.0,102.1 150.2,102.1 151.4,89.4 152.6,102.1 153.9,89.4 155.1,127.5 156.3,89.4 157.5,102.1 158.7,89.4 159.9,89.4 161.2,102.1 162.4,114.8 163.6,64.0 164.8,89.4 166.0,76.7 167.2,89.4 168.5,127.5 169.7,102.1 170.9,102.1 172.1,89.4 173.3,76.7 174.5,76.7 175.8,76.7 177.0,127.5 178.2,114.8 179.4,102.1 180.6,102.1 181.8,89.4 183.1,89.4 184.3,64.0 185.5,89.4 186.7,76.7 187.9,89.4 189.2,89.4 190.4,89.4 191.6,102.1 192.8,127.5 194.0,102.1 195.2,102.1 196.5,76.7 197.7,76.7 198.9,102.1 200.1,114.8 201.3,76.7 202.5,89.4 203.8,89.4 205.0,127.5 206.2,89.4 207.4,102.1 208.6,76.7 209.8,89.4 211.1,64.0 212.3,102.1 213.5,89.4 214.7,102.1 215.9,76.7 217.1,102.1 218.4,89.4 219.6,127.5 220.8,76.7 222.0,102.1 223.2,102.1 224.4,102.1 225.7,102.1 226.9,102.1 228.1,76.7 229.3,76.7 230.5,51.3 231.8,76.7 233.0,89.4 234.2,89.4 235.4,76.7 236.6,102.1 237.8,89.4 239.1,114.8 240.3,102.1 241.5,102.1 242.7,114.8 243.9,76.7 245.1,127.5 246.4,102.1 247.6,102.1 248.8,102.1 250.0,89.4 251.2,89.4 252.4,89.4 253.7,76.7 254.9,89.4 256.1,89.4 257.3,38.6 258.5,102.1 259.7,127.5 261.0,102.1 262.2,51.3 263.4,102.1 264.6,89.4 265.8,76.7 267.0,127.5 268.3,76.7 269.5,76.7 270.7,102.1 271.9,89.4 273.1,102.1 274.3,102.1 275.6,102.1 276.8,114.8 278.0,102.1 279.2,89.4 280.4,89.4 281.7,13.2 282.9,127.5 284.1,114.8 285.3,114.8 286.5,102.1 287.7,89.4 289.0,89.4 290.2,76.7 291.4,76.7 292.6,102.1 293.8,102.1 295.0,89.4 296.3,127.5 297.5,89.4 298.7,89.4 299.9,127.5 301.1,102.1 302.3,102.1 303.6,76.7 304.8,76.7 306.0,102.1 307.2,76.7 308.4,114.8 309.6,114.8 310.9,64.0 312.1,89.4 313.3,102.1 314.5,89.4 315.7,114.8 316.9,114.8 318.2,127.5 319.4,76.7 320.6,102.1 321.8,89.4 323.0,102.1 324.2,64.0 325.5,89.4 326.7,89.4 327.9,102.1 329.1,102.1 330.3,102.1 331.6,89.4 332.8,76.7 334.0,127.5 335.2,102.1 336.4,114.8 337.6,102.1 338.9,127.5 340.1,102.1 341.3,102.1 342.5,89.4 343.7,89.4 344.9,89.4 346.2,102.1 347.4,64.0 348.6,89.4 349.8,102.1 351.0,89.4 352.2,89.4 353.5,114.8 354.7,89.4 355.9,76.7 357.1,64.0 358.3,76.7 359.5,76.7 360.8,89.4 362.0,89.4 363.2,76.7 364.4,114.8 365.6,76.7 366.8,102.1 368.1,102.1 369.3,102.1 370.5,76.7 371.7,102.1 372.9,89.4 374.2,89.4 375.4,102.1 376.6,89.4 377.8,89.4 379.0,102.1 380.2,102.1 381.5,76.7 382.7,89.4 383.9,89.4 385.1,89.4 386.3,76.7 387.5,102.1 388.8,76.7 390.0,89.4 391.2,76.7 392.4,114.8 393.6,127.5 394.8,76.7 396.1,64.0 397.3,89.4 398.5,114.8 399.7,102.1 400.9,64.0 402.1,102.1 403.4,89.4 404.6,89.4 405.8,76.7 407.0,64.0 408.2,89.4 409.4,89.4 410.7,127.5 411.9,89.4 413.1,89.4 414.3,64.0 415.5,76.7 416.8,76.7 418.0,102.1 419.2,76.7 420.4,102.1 421.6,89.4 422.8,127.5 424.1,51.3 425.3,89.4 426.5,89.4 427.7,102.1 428.9,89.4 430.1,51.3 431.4,76.7 432.6,89.4 433.8,13.2 435.0,76.7 436.2,89.4 437.4,89.4 438.7,89.4 439.9,89.4 441.1,102.1 442.3,102.1 443.5,89.4 444.7,102.1 446.0,76.7 447.2,64.0 448.4,102.1 449.6,102.1 450.8,102.1 452.0,51.3 453.3,89.4 454.5,89.4 455.7,114.8 456.9,114.8 458.1,114.8 459.3,127.5" fill="none" stroke="#000" stroke-width="1"/></svg>
<div class="a" style="left:659px;top:297px;width:582px;height:289px;background:#dfdfb4;border-top:1px solid #8a8a8a;border-left:1px solid #8a8a8a;box-shadow:inset 2px 2px 0 #fff,inset -1px -1px 0 #5e5e4a,inset -2px -2px 0 #a8a888"></div>
<div class="a" style="left:679px;top:315px;width:555px;height:255px;background:#fff"></div>
<div class="t" style="left:895px;top:302px;font-size:11.9px;font-weight:bold">distribuzione-velocità</div>
<div class="t" style="left:670.5px;top:320px;font-size:10px">5</div>
<div class="t" style="left:670.5px;top:559px;font-size:10px">0</div>
<div class="t" style="left:678.5px;top:572px;font-size:10.5px;letter-spacing:0.1px">104.7</div>
<div class="t" style="left:941.5px;top:572.5px;font-size:10.5px">tempi</div>
<div class="t" style="right:135px;top:572px;font-size:10.5px;letter-spacing:0.1px">131.4</div>
<div class="t" style="left:665px;top:489px;font-size:10.7px;transform:rotate(-90deg);transform-origin:0 0">numero di bandisti</div>
<svg class="a" style="left:679px;top:315px" width="555" height="255" shape-rendering="crispEdges"><rect x="0.5" y="153.5" width="10" height="102.5" fill="none" stroke="#000" stroke-width="1"/><rect x="10.5" y="204.5" width="11" height="51.5" fill="none" stroke="#000" stroke-width="1"/><line x1="21" y1="254.5" x2="32" y2="254.5" stroke="#000" stroke-width="1"/><line x1="31" y1="254.5" x2="42" y2="254.5" stroke="#000" stroke-width="1"/><line x1="41" y1="254.5" x2="53" y2="254.5" stroke="#000" stroke-width="1"/><line x1="52" y1="254.5" x2="63" y2="254.5" stroke="#000" stroke-width="1"/><line x1="62" y1="254.5" x2="74" y2="254.5" stroke="#000" stroke-width="1"/><line x1="73" y1="254.5" x2="84" y2="254.5" stroke="#000" stroke-width="1"/><rect x="83.5" y="153.5" width="10" height="102.5" fill="none" stroke="#000" stroke-width="1"/><rect x="93.5" y="153.5" width="11" height="102.5" fill="none" stroke="#000" stroke-width="1"/><rect x="104.5" y="204.5" width="10" height="51.5" fill="none" stroke="#000" stroke-width="1"/><rect x="114.5" y="204.5" width="10" height="51.5" fill="none" stroke="#000" stroke-width="1"/><line x1="124" y1="254.5" x2="136" y2="254.5" stroke="#000" stroke-width="1"/><rect x="135.5" y="153.5" width="10" height="102.5" fill="none" stroke="#000" stroke-width="1"/><rect x="145.5" y="102.5" width="11" height="153.5" fill="none" stroke="#000" stroke-width="1"/><line x1="156" y1="254.5" x2="167" y2="254.5" stroke="#000" stroke-width="1"/><rect x="166.5" y="102.5" width="10" height="153.5" fill="none" stroke="#000" stroke-width="1"/><rect x="176.5" y="102.5" width="11" height="153.5" fill="none" stroke="#000" stroke-width="1"/><rect x="187.5" y="0.5" width="10" height="255.5" fill="none" stroke="#000" stroke-width="1"/><rect x="197.5" y="204.5" width="10" height="51.5" fill="none" stroke="#000" stroke-width="1"/><line x1="207" y1="254.5" x2="219" y2="254.5" stroke="#000" stroke-width="1"/><line x1="218" y1="254.5" x2="229" y2="254.5" stroke="#000" stroke-width="1"/><rect x="228.5" y="51.5" width="11" height="204.5" fill="none" stroke="#000" stroke-width="1"/><rect x="239.5" y="153.5" width="10" height="102.5" fill="none" stroke="#000" stroke-width="1"/><rect x="249.5" y="51.5" width="10" height="204.5" fill="none" stroke="#000" stroke-width="1"/><rect x="259.5" y="102.5" width="11" height="153.5" fill="none" stroke="#000" stroke-width="1"/><rect x="270.5" y="204.5" width="10" height="51.5" fill="none" stroke="#000" stroke-width="1"/><rect x="280.5" y="0.5" width="10" height="255.5" fill="none" stroke="#000" stroke-width="1"/><rect x="290.5" y="102.5" width="11" height="153.5" fill="none" stroke="#000" stroke-width="1"/><rect x="301.5" y="0.5" width="10" height="255.5" fill="none" stroke="#000" stroke-width="1"/><rect x="311.5" y="153.5" width="11" height="102.5" fill="none" stroke="#000" stroke-width="1"/><rect x="322.5" y="102.5" width="10" height="153.5" fill="none" stroke="#000" stroke-width="1"/><rect x="332.5" y="204.5" width="10" height="51.5" fill="none" stroke="#000" stroke-width="1"/><rect x="342.5" y="204.5" width="11" height="51.5" fill="none" stroke="#000" stroke-width="1"/><rect x="353.5" y="102.5" width="10" height="153.5" fill="none" stroke="#000" stroke-width="1"/><rect x="363.5" y="204.5" width="10" height="51.5" fill="none" stroke="#000" stroke-width="1"/><rect x="373.5" y="102.5" width="11" height="153.5" fill="none" stroke="#000" stroke-width="1"/><rect x="384.5" y="102.5" width="10" height="153.5" fill="none" stroke="#000" stroke-width="1"/><line x1="394" y1="254.5" x2="406" y2="254.5" stroke="#000" stroke-width="1"/><rect x="405.5" y="204.5" width="10" height="51.5" fill="none" stroke="#000" stroke-width="1"/><line x1="415" y1="254.5" x2="426" y2="254.5" stroke="#000" stroke-width="1"/><line x1="425" y1="254.5" x2="437" y2="254.5" stroke="#000" stroke-width="1"/><line x1="436" y1="254.5" x2="447" y2="254.5" stroke="#000" stroke-width="1"/><line x1="446" y1="254.5" x2="457" y2="254.5" stroke="#000" stroke-width="1"/><line x1="456" y1="254.5" x2="468" y2="254.5" stroke="#000" stroke-width="1"/><line x1="467" y1="254.5" x2="478" y2="254.5" stroke="#000" stroke-width="1"/><line x1="477" y1="254.5" x2="489" y2="254.5" stroke="#000" stroke-width="1"/><rect x="488.5" y="204.5" width="10" height="51.5" fill="none" stroke="#000" stroke-width="1"/><line x1="498" y1="254.5" x2="509" y2="254.5" stroke="#000" stroke-width="1"/><line x1="508" y1="254.5" x2="520" y2="254.5" stroke="#000" stroke-width="1"/><line x1="519" y1="254.5" x2="530" y2="254.5" stroke="#000" stroke-width="1"/><rect x="529.5" y="204.5" width="10" height="51.5" fill="none" stroke="#000" stroke-width="1"/></svg>
<div class="a" style="left:679px;top:442px;width:16px;height:11px;background:#dfdfb4"></div>
<div class="t" style="left:679px;top:443px;font-size:10px">2.4</div>
<div class="a" style="left:884px;top:559px;width:29px;height:11px;background:#dfdfb4"></div>
<div class="t" style="left:885px;top:561px;font-size:10.5px">115.3</div>
<div class="a" style="left:659px;top:590px;width:583px;height:81px;background:#dfdfb4;border-top:1px solid #8a8a8a;border-left:1px solid #8a8a8a;box-shadow:inset 2px 2px 0 #fff,inset -1px 0 0 #5e5e4a,inset -2px 0 0 #a8a888"></div>
<div class="a" style="left:683px;top:608px;width:463px;height:63px;background:#fff"></div>
<div class="t" style="left:897.5px;top:594px;font-size:11.6px;font-weight:bold">plot 1</div>
<div class="t" style="left:663.5px;top:614px;font-size:10.5px">132</div>
<svg class="a" style="left:683px;top:608px" width="463" height="63"><polyline points="1.5,64.0 1.5,17.1 2.5,16.4 3.5,16.5 4.5,16.1 5.6,18.0 6.6,19.5 7.6,21.4 8.6,17.6 9.6,15.8 10.6,13.7 11.7,15.6 12.7,17.2 13.7,19.3 14.7,17.6 15.7,15.8 16.7,14.0 17.7,16.3 18.8,19.0 19.8,22.8 20.8,22.1 21.8,20.6 22.8,19.4 23.8,19.9 24.9,20.6 25.9,22.3 26.9,20.5 27.9,19.3 28.9,17.6 29.9,17.9 30.9,18.5 32.0,20.5 33.0,19.5 34.0,18.4 35.0,18.4 36.0,18.0 37.0,17.6 38.1,17.9 39.1,18.0 40.1,19.0 41.1,19.4 42.1,17.5 43.1,15.8 44.1,15.1 45.2,15.9 46.2,16.0 47.2,16.4 48.2,18.2 49.2,19.8 50.2,20.3 51.3,20.9 52.3,20.2 53.3,19.0 54.3,18.6 55.3,18.6 56.3,18.9 57.3,21.9 58.4,24.2 59.4,26.4 60.4,23.7 61.4,21.7 62.4,19.4 63.4,18.9 64.5,17.8 65.5,17.0 66.5,17.3 67.5,17.5 68.5,17.8 69.5,16.7 70.5,15.7 71.6,15.4 72.6,15.7 73.6,15.3 74.6,15.8 75.6,16.1 76.6,16.9 77.7,16.9 78.7,19.1 79.7,21.2 80.7,23.6 81.7,22.0 82.7,20.2 83.7,18.3 84.8,18.7 85.8,19.0 86.8,19.3 87.8,19.4 88.8,20.0 89.8,20.1 90.9,21.1 91.9,22.5 92.9,24.8 93.9,23.2 94.9,21.1 95.9,18.9 96.9,19.0 98.0,19.3 99.0,19.5 100.0,22.3 101.0,25.3 102.0,28.1 103.0,24.2 104.1,20.0 105.1,16.2 106.1,16.2 107.1,16.7 108.1,18.0 109.1,18.6 110.1,19.9 111.2,20.3 112.2,21.8 113.2,23.6 114.2,24.7 115.2,21.3 116.2,19.5 117.2,16.1 118.3,14.4 119.3,12.8 120.3,11.5 121.3,14.5 122.3,18.0 123.3,21.3 124.4,20.0 125.4,18.8 126.4,17.0 127.4,16.5 128.4,16.4 129.4,16.9 130.4,17.9 131.5,19.1 132.5,20.4 133.5,20.2 134.5,21.0 135.5,20.5 136.5,20.3 137.6,20.2 138.6,20.8 139.6,20.1 140.6,19.1 141.6,18.6 142.6,20.8 143.6,22.4 144.7,23.9 145.7,24.6 146.7,25.3 147.7,25.9 148.7,24.1 149.7,22.8 150.8,21.6 151.8,20.2 152.8,20.3 153.8,19.9 154.8,20.8 155.8,23.0 156.8,24.2 157.9,23.5 158.9,23.2 159.9,23.2 160.9,22.1 161.9,20.6 162.9,18.7 164.0,18.9 165.0,19.0 166.0,19.1 167.0,20.5 168.0,21.7 169.0,23.2 170.0,21.7 171.1,20.3 172.1,19.1 173.1,18.8 174.1,19.1 175.1,18.5 176.1,19.1 177.2,19.7 178.2,19.6 179.2,19.7 180.2,19.6 181.2,18.4 182.2,18.8 183.2,19.3 184.3,19.0 185.3,18.0 186.3,16.3 187.3,13.9 188.3,17.7 189.3,21.1 190.4,24.0 191.4,21.6 192.4,20.3 193.4,18.5 194.4,17.9 195.4,17.1 196.4,15.9 197.5,17.5 198.5,20.1 199.5,22.7 200.5,22.5 201.5,21.7 202.5,20.6 203.6,20.1 204.6,20.7 205.6,20.6 206.6,21.5 207.6,21.9 208.6,22.9 209.6,23.7 210.7,24.9 211.7,26.4 212.7,25.3 213.7,23.8 214.7,22.0 215.7,23.1 216.8,24.9 217.8,26.0 218.8,25.9 219.8,27.1 220.8,27.8 221.8,26.3 222.8,23.0 223.9,19.8 224.9,20.1 225.9,20.7 226.9,20.8 227.9,21.3 228.9,21.7 230.0,22.8 231.0,20.2 232.0,17.6 233.0,16.2 234.0,17.9 235.0,19.8 236.0,20.9 237.1,22.5 238.1,23.8 239.1,25.2 240.1,25.3 241.1,25.3 242.1,25.1 243.2,24.7 244.2,23.5 245.2,22.7 246.2,20.5 247.2,18.0 248.2,15.2 249.2,19.5 250.3,23.1 251.3,26.8 252.3,25.5 253.3,23.6 254.3,22.6 255.3,23.0 256.4,23.6 257.4,24.3 258.4,23.0 259.4,22.6 260.4,21.8 261.4,19.5 262.4,17.3 263.5,15.8 264.5,16.0 265.5,17.1 266.5,17.1 267.5,17.2 268.5,17.4 269.6,18.1 270.6,21.0 271.6,23.7 272.6,26.5 273.6,23.2 274.6,21.2 275.6,18.9 276.7,19.6 277.7,20.3 278.7,20.5 279.7,20.3 280.7,20.7 281.7,20.3 282.8,20.7 283.8,22.2 284.8,23.7 285.8,23.7 286.8,23.8 287.8,23.8 288.8,24.2 289.9,23.7 290.9,23.4 291.9,22.1 292.9,21.2 293.9,19.6 294.9,17.8 296.0,15.7 297.0,13.6 298.0,16.4 299.0,19.5 300.0,23.0 301.0,22.7 302.0,22.5 303.1,22.4 304.1,23.4 305.1,24.6 306.1,24.9 307.1,23.8 308.1,22.0 309.2,21.1 310.2,20.1 311.2,19.1 312.2,18.3 313.2,19.3 314.2,19.8 315.2,20.9 316.3,19.1 317.3,17.3 318.3,15.6 319.3,16.5 320.3,16.6 321.3,17.1 322.4,17.2 323.4,16.3 324.4,16.5 325.4,17.4 326.4,18.4 327.4,19.5 328.4,21.3 329.5,23.2 330.5,25.2 331.5,23.6 332.5,22.7 333.5,21.7 334.5,21.9 335.6,22.3 336.6,23.1 337.6,22.4 338.6,21.9 339.6,21.1 340.6,21.6 341.6,22.7 342.7,22.9 343.7,21.4 344.7,21.5 345.7,20.5 346.7,20.0 347.7,19.0 348.8,19.4 349.8,17.9 350.8,16.3 351.8,14.0 352.8,15.8 353.8,16.9 354.8,17.8 355.9,17.7 356.9,17.7 357.9,17.7 358.9,19.8 359.9,20.8 360.9,23.6 361.9,23.1 363.0,23.2 364.0,22.7 365.0,23.2 366.0,23.6 367.0,23.3 368.0,23.9 369.1,24.6 370.1,24.5 371.1,21.8 372.1,19.7 373.1,17.6 374.1,19.0 375.1,20.4 376.2,22.5 377.2,23.6 378.2,24.4 379.2,25.4 380.2,22.2 381.2,20.0 382.3,17.8 383.3,18.8 384.3,20.1" fill="none" stroke="#000" stroke-width="1.1"/><polyline points="1.5,63.0 1.5,16.1 2.5,15.4 3.5,15.5 4.5,15.1 5.6,17.0 6.6,18.5 7.6,20.4 8.6,16.6 9.6,14.8 10.6,12.7 11.7,14.6 12.7,16.2 13.7,18.3 14.7,16.6 15.7,14.8 16.7,13.0 17.7,15.3 18.8,18.0 19.8,21.8 20.8,21.1 21.8,19.6 22.8,18.4 23.8,18.9 24.9,19.6 25.9,21.3 26.9,19.5 27.9,18.3 28.9,16.6 29.9,16.9 30.9,17.5 32.0,19.5 33.0,18.5 34.0,17.4 35.0,17.4 36.0,17.0 37.0,16.6 38.1,16.9 39.1,17.0 40.1,18.0 41.1,18.4 42.1,16.5 43.1,14.8 44.1,14.1 45.2,14.9 46.2,15.0 47.2,15.4 48.2,17.2 49.2,18.8 50.2,19.3 51.3,19.9 52.3,19.2 53.3,18.0 54.3,17.6 55.3,17.6 56.3,17.9 57.3,20.9 58.4,23.2 59.4,25.4 60.4,22.7 61.4,20.7 62.4,18.4 63.4,17.9 64.5,16.8 65.5,16.0 66.5,16.3 67.5,16.5 68.5,16.8 69.5,15.7 70.5,14.7 71.6,14.4 72.6,14.7 73.6,14.3 74.6,14.8 75.6,15.1 76.6,15.9 77.7,15.9 78.7,18.1 79.7,20.2 80.7,22.6 81.7,21.0 82.7,19.2 83.7,17.3 84.8,17.7 85.8,18.0 86.8,18.3 87.8,18.4 88.8,19.0 89.8,19.1 90.9,20.1 91.9,21.5 92.9,23.8 93.9,22.2 94.9,20.1 95.9,17.9 96.9,18.0 98.0,18.3 99.0,18.5 100.0,21.3 101.0,24.3 102.0,27.1 103.0,23.2 104.1,19.0 105.1,15.2 106.1,15.2 107.1,15.7 108.1,17.0 109.1,17.6 110.1,18.9 111.2,19.3 112.2,20.8 113.2,22.6 114.2,23.7 115.2,20.3 116.2,18.5 117.2,15.1 118.3,13.4 119.3,11.8 120.3,10.5 121.3,13.5 122.3,17.0 123.3,20.3 124.4,19.0 125.4,17.8 126.4,16.0 127.4,15.5 128.4,15.4 129.4,15.9 130.4,16.9 131.5,18.1 132.5,19.4 133.5,19.2 134.5,20.0 135.5,19.5 136.5,19.3 137.6,19.2 138.6,19.8 139.6,19.1 140.6,18.1 141.6,17.6 142.6,19.8 143.6,21.4 144.7,22.9 145.7,23.6 146.7,24.3 147.7,24.9 148.7,23.1 149.7,21.8 150.8,20.6 151.8,19.2 152.8,19.3 153.8,18.9 154.8,19.8 155.8,22.0 156.8,23.2 157.9,22.5 158.9,22.2 159.9,22.2 160.9,21.1 161.9,19.6 162.9,17.7 164.0,17.9 165.0,18.0 166.0,18.1 167.0,19.5 168.0,20.7 169.0,22.2 170.0,20.7 171.1,19.3 172.1,18.1 173.1,17.8 174.1,18.1 175.1,17.5 176.1,18.1 177.2,18.7 178.2,18.6 179.2,18.7 180.2,18.6 181.2,17.4 182.2,17.8 183.2,18.3 184.3,18.0 185.3,17.0 186.3,15.3 187.3,12.9 188.3,16.7 189.3,20.1 190.4,23.0 191.4,20.6 192.4,19.3 193.4,17.5 194.4,16.9 195.4,16.1 196.4,14.9 197.5,16.5 198.5,19.1 199.5,21.7 200.5,21.5 201.5,20.7 202.5,19.6 203.6,19.1 204.6,19.7 205.6,19.6 206.6,20.5 207.6,20.9 208.6,21.9 209.6,22.7 210.7,23.9 211.7,25.4 212.7,24.3 213.7,22.8 214.7,21.0 215.7,22.1 216.8,23.9 217.8,25.0 218.8,24.9 219.8,26.1 220.8,26.8 221.8,25.3 222.8,22.0 223.9,18.8 224.9,19.1 225.9,19.7 226.9,19.8 227.9,20.3 228.9,20.7 230.0,21.8 231.0,19.2 232.0,16.6 233.0,15.2 234.0,16.9 235.0,18.8 236.0,19.9 237.1,21.5 238.1,22.8 239.1,24.2 240.1,24.3 241.1,24.3 242.1,24.1 243.2,23.7 244.2,22.5 245.2,21.7 246.2,19.5 247.2,17.0 248.2,14.2 249.2,18.5 250.3,22.1 251.3,25.8 252.3,24.5 253.3,22.6 254.3,21.6 255.3,22.0 256.4,22.6 257.4,23.3 258.4,22.0 259.4,21.6 260.4,20.8 261.4,18.5 262.4,16.3 263.5,14.8 264.5,15.0 265.5,16.1 266.5,16.1 267.5,16.2 268.5,16.4 269.6,17.1 270.6,20.0 271.6,22.7 272.6,25.5 273.6,22.2 274.6,20.2 275.6,17.9 276.7,18.6 277.7,19.3 278.7,19.5 279.7,19.3 280.7,19.7 281.7,19.3 282.8,19.7 283.8,21.2 284.8,22.7 285.8,22.7 286.8,22.8 287.8,22.8 288.8,23.2 289.9,22.7 290.9,22.4 291.9,21.1 292.9,20.2 293.9,18.6 294.9,16.8 296.0,14.7 297.0,12.6 298.0,15.4 299.0,18.5 300.0,22.0 301.0,21.7 302.0,21.5 303.1,21.4 304.1,22.4 305.1,23.6 306.1,23.9 307.1,22.8 308.1,21.0 309.2,20.1 310.2,19.1 311.2,18.1 312.2,17.3 313.2,18.3 314.2,18.8 315.2,19.9 316.3,18.1 317.3,16.3 318.3,14.6 319.3,15.5 320.3,15.6 321.3,16.1 322.4,16.2 323.4,15.3 324.4,15.5 325.4,16.4 326.4,17.4 327.4,18.5 328.4,20.3 329.5,22.2 330.5,24.2 331.5,22.6 332.5,21.7 333.5,20.7 334.5,20.9 335.6,21.3 336.6,22.1 337.6,21.4 338.6,20.9 339.6,20.1 340.6,20.6 341.6,21.7 342.7,21.9 343.7,20.4 344.7,20.5 345.7,19.5 346.7,19.0 347.7,18.0 348.8,18.4 349.8,16.9 350.8,15.3 351.8,13.0 352.8,14.8 353.8,15.9 354.8,16.8 355.9,16.7 356.9,16.7 357.9,16.7 358.9,18.8 359.9,19.8 360.9,22.6 361.9,22.1 363.0,22.2 364.0,21.7 365.0,22.2 366.0,22.6 367.0,22.3 368.0,22.9 369.1,23.6 370.1,23.5 371.1,20.8 372.1,18.7 373.1,16.6 374.1,18.0 375.1,19.4 376.2,21.5 377.2,22.6 378.2,23.4 379.2,24.4 380.2,21.2 381.2,19.0 382.3,16.8 383.3,17.8 384.3,19.1" fill="none" stroke="#2cc23a" stroke-width="1.1"/></svg>
<div class="a" style="left:1150px;top:608px;width:12px;height:12px;background:#000;border:1px solid #333"></div>
<div class="t" style="left:1164.7px;top:610.5px;font-size:10.4px">mean</div>
<div class="a" style="left:1150px;top:624px;width:12px;height:12px;background:#2cc23a;border:1px solid #333"></div>
<div class="t" style="left:1164.7px;top:626.5px;font-size:10.4px">quadratic mean</div>
<div class="a" style="left:1150px;top:640px;width:12px;height:12px;background:#d7322a;border:1px solid #333"></div>
<div class="t" style="left:1164.7px;top:642.5px;font-size:10.4px">variance</div>
</body></html>
